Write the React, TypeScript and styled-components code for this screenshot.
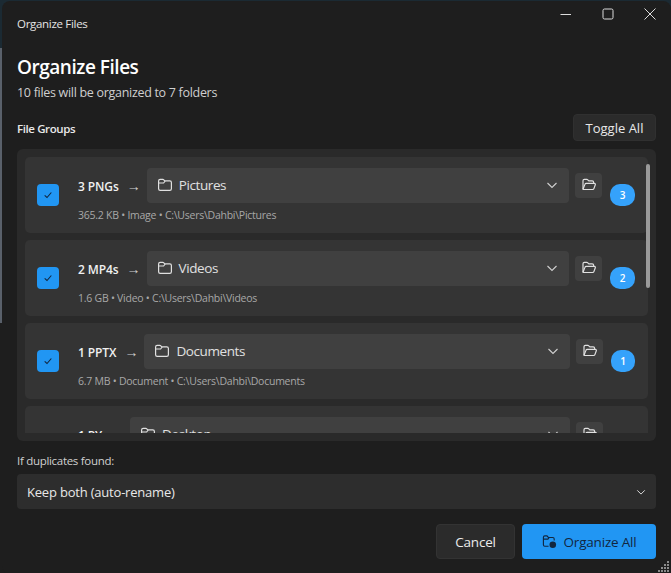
import { createGlobalStyle } from 'styled-components';
import styled from 'styled-components';

type TGroup = {
    id: string,
    label: string,
    folder: string,
    size: string,
    kind: string,
    path: string,
    count: number,
}

const groups: TGroup[] = [
    { id: 'png', label: '3 PNGs', folder: 'Pictures', size: '365.2 KB', kind: 'Image', path: 'C:\\Users\\Dahbi\\Pictures', count: 3 },
    { id: 'mp4', label: '2 MP4s', folder: 'Videos', size: '1.6 GB', kind: 'Video', path: 'C:\\Users\\Dahbi\\Videos', count: 2 },
    { id: 'pptx', label: '1 PPTX', folder: 'Documents', size: '6.7 MB', kind: 'Document', path: 'C:\\Users\\Dahbi\\Documents', count: 1 },
    { id: 'py', label: '1 PY', folder: 'Desktop', size: '2.1 KB', kind: 'Script', path: 'C:\\Users\\Dahbi\\Desktop', count: 1 },
];

const FolderIcon = () => (
    <svg width="16" height="16" viewBox="0 0 16 16" fill="none" stroke="currentColor" strokeWidth="1.2">
        <path d="M1.6 4c0-1 .7-1.6 1.6-1.6h2.6c.4 0 .7.1 1 .4l1 1.1h5c1 0 1.6.7 1.6 1.6v6.3c0 1-.7 1.6-1.6 1.6H3.2c-1 0-1.6-.7-1.6-1.6z" />
        <path d="M1.6 6h5l1.6-2" />
    </svg>
);

const OpenFolderIcon = () => (
    <svg width="16" height="16" viewBox="0 0 16 16" fill="none" stroke="currentColor" strokeWidth="1.2" strokeLinejoin="round">
        <path d="M2 12.2V3.8c0-.8.6-1.4 1.4-1.4h2.4c.4 0 .7.1 1 .4l1 1h3.4c.8 0 1.4.6 1.4 1.4v1.1" />
        <path d="M2 12.2 3.9 7.4c.2-.6.7-1 1.3-1h8.2c.7 0 1.2.7.9 1.4l-1.4 3.8c-.2.6-.7.9-1.3.9H3.2c-.7 0-1.2-.3-1.2-.3z" />
    </svg>
);

const Chevron = ({ size }: { size: number }) => (
    <svg width={size} height={size} viewBox="0 0 12 12" fill="none" stroke="currentColor" strokeWidth="1.1">
        <path d="M1.5 4 6 8.5 10.5 4" />
    </svg>
);

const OrganizeIcon = () => (
    <svg width="15" height="15" viewBox="0 0 16 16" fill="none" stroke="currentColor" strokeWidth="1.2">
        <path d="M7 13H3c-.9 0-1.5-.6-1.5-1.5v-8C1.500 2.600 2.100 2 3 2h2.300l1.500 1.700h4.700c.9 0 1.500.6 1.500 1.500V7" />
        <path d="M1.500 5.500h4.800l1.200-1.600" />
        <circle cx="11.500" cy="11.500" r="3.500" fill="currentColor" stroke="none" />
    </svg>
);

const Organize = () => {
    return (
        <Window>
            <TitleBar>
                <TitleText>Organize Files</TitleText>
                <Caption>
                    <svg width="12" height="12" viewBox="0 0 12 12" stroke="currentColor" strokeWidth="1"><path d="M.5 6.500h10.500" /></svg>
                    <svg width="12" height="12" viewBox="0 0 12 12" fill="none" stroke="currentColor" strokeWidth="1"><rect x="1" y="1" width="10" height="10" rx="1.500" /></svg>
                    <svg width="12" height="12" viewBox="0 0 12 12" stroke="currentColor" strokeWidth="1"><path d="M.5.5l11 11M11.500.5l-11 11" /></svg>
                </Caption>
            </TitleBar>

            <Body>
                <Heading>Organize Files</Heading>
                <Subheading>10 files will be organized to 7 folders</Subheading>

                <SectionRow>
                    <SectionTitle>File Groups</SectionTitle>
                    <ToggleButton>Toggle All</ToggleButton>
                </SectionRow>

                <ListPanel>
                    <ListClip>
                        {groups.map(group => (
                            <GroupCard key={group.id}>
                                <CheckBox>
                                    <svg width="10" height="10" viewBox="0 0 12 12" fill="none" stroke="#12263f" strokeWidth="1.300"><path d="M2 6.500 4.800 9 10 3" /></svg>
                                </CheckBox>
                                <GroupMain>
                                    <GroupTop>
                                        <GroupLabel>{group.label}</GroupLabel>
                                        <Arrow>→</Arrow>
                                        <FolderSelect>
                                            <FolderIcon />
                                            <FolderName>{group.folder}</FolderName>
                                            <ChevronSlot><Chevron size={12} /></ChevronSlot>
                                        </FolderSelect>
                                        <BrowseButton><OpenFolderIcon /></BrowseButton>
                                    </GroupTop>
                                    <GroupMeta>{group.size} • {group.kind} • {group.path}</GroupMeta>
                                </GroupMain>
                                <CountBadge $wide={group.count > 1}>{group.count}</CountBadge>
                            </GroupCard>
                        ))}
                    </ListClip>
                    <ScrollThumb />
                </ListPanel>

                <FieldLabel>If duplicates found:</FieldLabel>
                <DuplicateSelect>
                    <span>Keep both (auto-rename)</span>
                    <Chevron size={10} />
                </DuplicateSelect>

                <Footer>
                    <CancelButton>Cancel</CancelButton>
                    <PrimaryButton><OrganizeIcon />Organize All</PrimaryButton>
                </Footer>
            </Body>

            <ResizeGrip viewBox="0 0 12 12" width="12" height="12" fill="#8a8a8a">
                {[[9, 0], [6, 3], [9, 3], [3, 6], [6, 6], [9, 6], [0, 9], [3, 9], [6, 9], [9, 9]].map(([x, y]) => (
                    <rect key={`${x}-${y}`} x={x} y={y} width="2" height="2" />
                ))}
            </ResizeGrip>
        </Window>
    );
};

const GlobalStyle = createGlobalStyle`
    html, body {
        margin: 0;
        height: 100%;
        background: linear-gradient(#1b2a33 0 48px, #59606a 48px 323px, #1e1e1e 323px);
        overflow: hidden;
    }
    #root {
        height: 100%;
    }
    * {
        box-sizing: border-box;
    }
`

const Window = styled.div`
    position: relative;
    height: 573px;
    margin: 1px 0 0 2px;
    background: #1e1e1e;
    border-radius: 8px 8px 0 8px;
    color: #ffffff;
    font-family: "Open Sans", "Noto Sans", sans-serif;
    overflow: hidden;
`

const TitleBar = styled.div`
    display: flex;
    justify-content: space-between;
    align-items: center;
    height: 32px;
    padding: 0 15px;
    margin-top: 6px;
`

const TitleText = styled.div`
    font-size: 11.500px;
    letter-spacing: -0.3px;
    color: #e4e4e4;
`

const Caption = styled.div`
    display: flex;
    gap: 30px;
    color: #dcdcdc;
    margin-top: -18px;
`

const Body = styled.div`
    display: flex;
    flex-direction: column;
    padding: 14px 15px 0;
`

const Heading = styled.h1`
    margin: 0;
    font-size: 19px;
    letter-spacing: -0.47px;
    line-height: 28px;
    font-weight: 600;
`

const Subheading = styled.div`
    margin-top: 3px;
    font-size: 12.500px;
    letter-spacing: -0.3px;
    line-height: 18px;
    color: #cfcfcf;
`

const SectionRow = styled.div`
    display: flex;
    justify-content: space-between;
    align-items: center;
    height: 27px;
    margin-top: 12px;
`

const SectionTitle = styled.div`
    padding-top: 2px;
    font-size: 11.500px;
    letter-spacing: -0.4px;
    font-weight: 600;
    color: #e8e8e8;
`

const ToggleButton = styled.button`
    width: 83px;
    height: 27px;
    padding: 0;
    border: 1px solid #303030;
    border-radius: 4px;
    background: #2b2b2b;
    color: #e8e8e8;
    font: inherit;
    font-size: 13px;
`

const ListPanel = styled.div`
    position: relative;
    height: 292px;
    margin-top: 8px;
    padding: 8px;
    background: #2a2a2a;
    border-radius: 6px;
`

const ListClip = styled.div`
    display: flex;
    flex-direction: column;
    gap: 7px;
    height: 276px;
    overflow: hidden;
`

const GroupCard = styled.div`
    flex: none;
    display: flex;
    align-items: center;
    height: 76px;
    padding: 0 12px;
    background: #343434;
    border-radius: 5px;
`

const CheckBox = styled.div`
    flex: none;
    display: flex;
    align-items: center;
    justify-content: center;
    width: 22px;
    height: 22px;
    margin-right: 19px;
    background: #2196f3;
    border-radius: 4px;
`

const GroupMain = styled.div`
    flex: 1;
    min-width: 0;
    display: flex;
    flex-direction: column;
    gap: 4px;
`

const GroupTop = styled.div`
    display: flex;
    align-items: center;
`

const GroupLabel = styled.span`
    padding-top: 2px;
    font-size: 12px;
    letter-spacing: -0.1px;
    font-weight: 600;
    color: #f0f0f0;
    white-space: nowrap;
`

const Arrow = styled.span`
    margin: 0 6px 0 8px;
    font-size: 14px;
    color: #d0d0d0;
`

const FolderSelect = styled.div`
    flex: 1;
    display: flex;
    align-items: center;
    gap: 6px;
    height: 35px;
    padding: 0 11px 0 10px;
    background: #404040;
    border-radius: 4px;
    color: #e0e0e0;
`

const FolderName = styled.span`
    flex: 1;
    font-size: 13.500px;
    letter-spacing: -0.4px;
`

const ChevronSlot = styled.span`
    display: flex;
    color: #d0d0d0;
`

const BrowseButton = styled.div`
    flex: none;
    display: flex;
    align-items: center;
    justify-content: center;
    width: 27px;
    height: 25px;
    margin-left: 6px;
    background: #404040;
    border-radius: 4px;
    color: #e0e0e0;
`

const GroupMeta = styled.div`
    font-size: 10.500px;
    letter-spacing: -0.25px;
    line-height: 16px;
    color: #a8a8a8;
    white-space: nowrap;
`

const CountBadge = styled.span<{ $wide: boolean }>`
    flex: none;
    display: flex;
    align-items: center;
    justify-content: center;
    width: ${props => (props.$wide ? '25px' : '24px')};
    height: 22px;
    margin: 0 1px 0 8px;
    background: #35a2fb;
    border-radius: 10px;
    font-size: 10px;
    font-weight: 600;
`

const ScrollThumb = styled.div`
    position: absolute;
    top: 15px;
    right: 6px;
    width: 4px;
    height: 124px;
    background: #9a9a9a;
    border-radius: 2px;
`

const FieldLabel = styled.div`
    margin-top: 11px;
    font-size: 11.500px;
    letter-spacing: -0.3px;
    line-height: 17px;
    color: #d0d0d0;
`

const DuplicateSelect = styled.div`
    display: flex;
    justify-content: space-between;
    align-items: center;
    height: 35px;
    margin-top: 5px;
    padding: 0 10px;
    background: #2d2d2d;
    border-radius: 4px;
    color: #e8e8e8;
    font-size: 13px;
    letter-spacing: -0.2px;
`

const Footer = styled.div`
    display: flex;
    justify-content: flex-end;
    gap: 7px;
    margin-top: 15px;
`

const CancelButton = styled.button`
    width: 79px;
    height: 35px;
    padding: 0;
    border: 1px solid #333333;
    border-radius: 4px;
    background: #2b2b2b;
    color: #ececec;
    font: inherit;
    font-size: 13.500px;
    letter-spacing: -0.2px;
`

const PrimaryButton = styled.button`
    display: flex;
    align-items: center;
    justify-content: center;
    gap: 7px;
    width: 134px;
    height: 35px;
    padding: 0;
    border: none;
    border-radius: 4px;
    background: #2196f3;
    color: #12263f;
    font: inherit;
    font-size: 13.500px;
    letter-spacing: -0.2px;
`

const ResizeGrip = styled.svg`
    position: absolute;
    right: 1px;
    bottom: 1px;
`

const App = () => (
    <>
        <GlobalStyle />
        <Organize />
    </>
);

export default App;
